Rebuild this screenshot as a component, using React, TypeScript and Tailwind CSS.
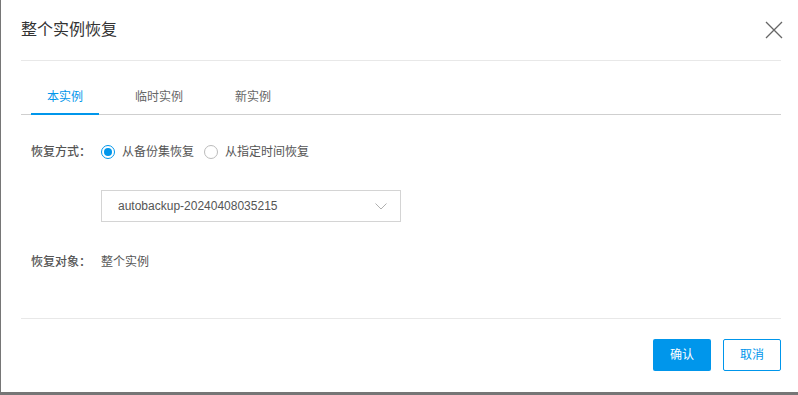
import React, { useState } from 'react';

const tabs = ['本实例', '临时实例', '新实例'];

function Radio({ checked, label, onClick }: { checked: boolean; label: string; onClick: () => void }) {
  return (
    <button type="button" onClick={onClick} className="flex items-center gap-[7px] text-[12px] text-[#555]">
      <span
        className={
          checked
            ? 'flex h-[14px] w-[14px] items-center justify-center rounded-full border border-[#0096eb]'
            : 'flex h-[14px] w-[14px] items-center justify-center rounded-full border border-[#bbb]'
        }
      >
        {checked && <span className="h-[8px] w-[8px] rounded-full bg-[#0096eb]" />}
      </span>
      {label}
    </button>
  );
}

export default function App() {
  const [active, setActive] = useState(0);
  const [mode, setMode] = useState(0);

  return (
    <div
      className="h-[395px] w-[798px] bg-[#767676] pb-[3px] pl-px"
      style={{ fontFamily: '"Liberation Sans", "Noto Sans CJK SC", sans-serif' }}
    >
      <div className="flex h-[392px] flex-col bg-white">
        {/* Header */}
        <div className="ml-[20px] mr-[17px] flex h-[61px] items-center justify-between border-b border-[#e8e8e8]">
          <h2 className="text-[16px] text-[#333]">整个实例恢复</h2>
          <button type="button" className="-mr-[2px] text-[#666]">
            <svg width="18" height="18" viewBox="0 0 18 18" fill="none" stroke="currentColor" strokeWidth={1.3}>
              <path d="M1 1L17 17M17 1L1 17" />
            </svg>
          </button>
        </div>

        {/* Tabs */}
        <div className="ml-[20px] mr-[17px] mt-[19px] flex gap-5 border-b border-[#cfcfcf] pl-[10px]">
          {tabs.map((t, i) => (
            <button
              key={t}
              type="button"
              onClick={() => setActive(i)}
              className={
                i === active
                  ? 'relative flex h-[34px] items-center px-4 text-[12px] text-[#0096eb]'
                  : 'relative flex h-[34px] items-center px-4 text-[12px] text-[#666]'
              }
            >
              {t}
              {i === active && <span className="absolute -bottom-px left-0 right-0 h-[2px] bg-[#0096eb]" />}
            </button>
          ))}
        </div>

        {/* Form */}
        <div className="pl-[30px]">
          <div className="mt-[27px] flex h-[20px] items-center">
            <span className="w-[70px] text-[12px] font-medium text-[#555]">恢复方式：</span>
            <Radio checked={mode === 0} label="从备份集恢复" onClick={() => setMode(0)} />
            <div className="ml-[10px]">
              <Radio checked={mode === 1} label="从指定时间恢复" onClick={() => setMode(1)} />
            </div>
          </div>

          <div className="mt-[28px] pl-[70px]">
            <div className="flex h-[32px] w-[300px] items-center justify-between border border-[#d4d4d4] pl-[16px] pr-[13px] text-[12px] text-[#555]">
              <span>autobackup-20240408035215</span>
              <svg width="12" height="7" viewBox="0 0 12 7" fill="none" stroke="#b0b0b0" strokeWidth={1}>
                <path d="M0.5 0.5L6 6L11.5 0.5" />
              </svg>
            </div>
          </div>

          <div className="mt-[30px] flex h-[20px] items-center">
            <span className="w-[70px] text-[12px] font-medium text-[#555]">恢复对象：</span>
            <span className="text-[12px] text-[#555]">整个实例</span>
          </div>
        </div>

        {/* Footer */}
        <div className="ml-[20px] mr-[17px] mt-[46px] border-t border-[#e8e8e8]" />
        <div className="mr-[17px] mt-[20px] flex justify-end gap-3">
          <button type="button" className="h-[32px] w-[58px] rounded-[2px] bg-[#0096eb] text-[12px] text-white">
            确认
          </button>
          <button
            type="button"
            className="h-[32px] w-[58px] rounded-[2px] border border-[#0096eb] bg-white text-[12px] text-[#0096eb]"
          >
            取消
          </button>
        </div>
      </div>
    </div>
  );
}
